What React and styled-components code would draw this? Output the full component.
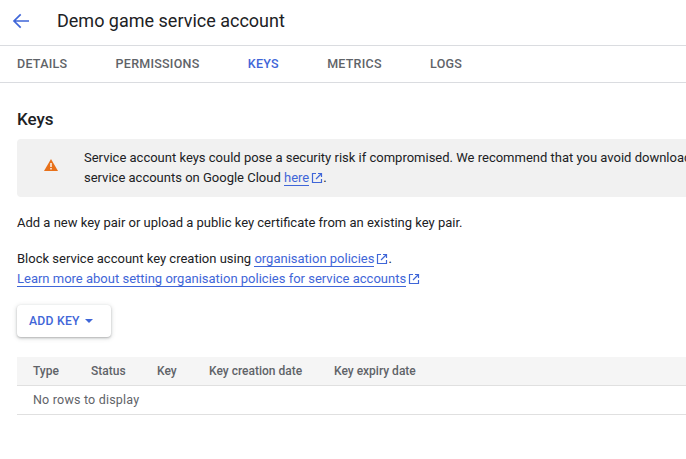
import React from "react";
import styled, { createGlobalStyle } from "styled-components";

const Global = createGlobalStyle`
  html, body {
    margin: 0;
    padding: 0;
    background: #fff;
    overflow: hidden;
  }
  * { box-sizing: border-box; }
`;

const Page = styled.div`
  width: 686px;
  height: 459px;
  overflow: hidden;
  font-family: Roboto, "Liberation Sans", sans-serif;
  font-size: 13px;
  line-height: 20px;
  color: #202124;
`;

const Header = styled.header`
  height: 46px;
  display: flex;
  align-items: center;
  padding: 0 0 4px 12px;
  border-bottom: 1px solid #dadce0;
`;

const BackButton = styled.button`
  width: 18px;
  height: 18px;
  padding: 0;
  border: 0;
  background: none;
  display: flex;
  color: #3f66d8;
`;

const PageTitle = styled.h1`
  margin: 0 0 0 27px;
  font-size: 18px;
  font-weight: 400;
  line-height: 24px;
  color: #202124;
`;

const Tabs = styled.nav`
  height: 37px;
  display: flex;
  align-items: center;
  gap: 48.3px;
  padding-left: 17px;
  border-bottom: 1px solid #dadce0;
`;

const Tab = styled.a`
  font-size: 12.5px;
  font-weight: 500;
  letter-spacing: 0.25px;
  color: ${(p) => (p.$active ? "#3f66d8" : "#5f6368")};
`;

const Content = styled.main`
  padding: 24px 0 0 17px;
`;

const SectionTitle = styled.h2`
  margin: 0;
  font-size: 17px;
  font-weight: 500;
  line-height: 24px;
  color: #202124;
`;

const Banner = styled.div`
  width: 720px;
  height: 58px;
  margin-top: 8px;
  display: flex;
  align-items: center;
  background: #f1f1f1;
  border-radius: 4px;
  white-space: nowrap;
`;

const BannerIcon = styled.div`
  width: 67px;
  flex: none;
  padding: 0 0 6px 27px;
  display: flex;
`;

const Paragraph = styled.p`
  margin: ${(p) => p.$top}px 0 0;
`;

const Link = styled.a`
  color: #3f66d8;
  border-bottom: 1px solid #3f66d8;
`;

const ExternalIcon = styled.svg`
  width: 12px;
  height: 12px;
  margin-left: 2px;
  vertical-align: -2px;
  color: #3f66d8;
`;

const AddKey = styled.button`
  width: 94px;
  height: 32px;
  margin-top: 16px;
  padding: 0 0 0 12px;
  display: flex;
  align-items: center;
  border: 0;
  border-radius: 4px;
  background: #fff;
  box-shadow: 0 1px 2px rgba(60, 64, 67, 0.3), 0 1px 4px 1px rgba(60, 64, 67, 0.15);
  font-family: inherit;
  font-size: 12.2px;
  font-weight: 500;
  letter-spacing: 0.25px;
  color: #3f66d8;
`;

const Caret = styled.span`
  margin-left: 5px;
  width: 0;
  height: 0;
  border-left: 4px solid transparent;
  border-right: 4px solid transparent;
  border-top: 4px solid #3f66d8;
`;

const Table = styled.div`
  width: 669px;
  margin-top: 20px;
  font-size: 12px;
  color: #5f6368;
`;

const HeaderRow = styled.div`
  height: 29px;
  display: flex;
  align-items: center;
  padding-left: 16px;
  background: #f5f5f5;
  border-bottom: 1px solid #e0e0e0;
  font-weight: 500;
`;

const Col = styled.div`
  width: ${(p) => p.$w}px;
  flex: none;
`;

const EmptyRow = styled.div`
  height: 29px;
  display: flex;
  align-items: center;
  padding-left: 16px;
  border-bottom: 1px solid #e0e0e0;
  font-size: 12.5px;
  letter-spacing: 0.2px;
`;

const External = () => (
  <ExternalIcon viewBox="0 0 12 12" fill="none" stroke="currentColor" strokeWidth="1.2">
    <path d="M5 1.5H1.5v9h9V7" />
    <path d="M7 1.5h3.5V5M10.5 1.5 5 7" />
  </ExternalIcon>
);

const columns = [
  ["Type", 58],
  ["Status", 66],
  ["Key", 52],
  ["Key creation date", 125],
  ["Key expiry date", 120],
];

export default function App() {
  return (
    <Page>
      <Global />
      <Header>
        <BackButton aria-label="Back">
          <svg width="18" height="18" viewBox="0 0 18 18" fill="none" stroke="currentColor" strokeWidth="1.7">
            <path d="M17 9H2M8.7 2.3 2 9l6.7 6.7" />
          </svg>
        </BackButton>
        <PageTitle>Demo game service account</PageTitle>
      </Header>
      <Tabs>
        <Tab>DETAILS</Tab>
        <Tab>PERMISSIONS</Tab>
        <Tab $active>KEYS</Tab>
        <Tab>METRICS</Tab>
        <Tab>LOGS</Tab>
      </Tabs>
      <Content>
        <SectionTitle>Keys</SectionTitle>
        <Banner>
          <BannerIcon>
            <svg width="14" height="12" viewBox="0 0 14 12">
              <path fill="#e8711a" d="M7 0 14 12H0Z" />
              <path fill="#fff" d="M6.3 4h1.4v4H6.3zM6.3 9h1.4v1.4H6.3z" />
            </svg>
          </BannerIcon>
          <div>
            Service account keys could pose a security risk if compromised. We recommend that you avoid downloading service account keys.
            <br />
            service accounts on Google Cloud <Link>here</Link>
            <External />.
          </div>
        </Banner>
        <Paragraph $top={16}>Add a new key pair or upload a public key certificate from an existing key pair.</Paragraph>
        <Paragraph $top={16}>
          Block service account key creation using <Link>organisation policies</Link>
          <External />.
        </Paragraph>
        <Paragraph $top={0}>
          <Link>Learn more about setting organisation policies for service accounts</Link>
          <External />
        </Paragraph>
        <AddKey>
          ADD KEY
          <Caret />
        </AddKey>
        <Table>
          <HeaderRow>
            {columns.map(([name, w]) => (
              <Col key={name} $w={w}>
                {name}
              </Col>
            ))}
          </HeaderRow>
          <EmptyRow>No rows to display</EmptyRow>
        </Table>
      </Content>
    </Page>
  );
}
